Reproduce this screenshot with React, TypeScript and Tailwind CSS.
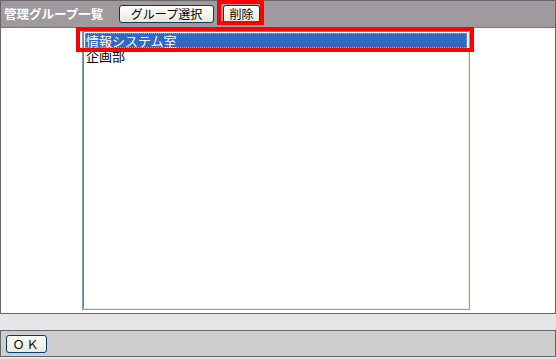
import React from 'react';

const jp = { fontFamily: '"Noto Sans CJK JP", "Noto Sans", sans-serif' };

const XpButton: React.FC<{ label: string; className?: string }> = ({ label, className = '' }) => (
  <button
    className={`h-[18px] rounded-[3px] border border-[#003c74] bg-gradient-to-b from-white to-[#ece9d8] text-[12px] leading-none text-black flex items-center justify-center ${className}`}
    style={jp}
  >
    {label}
  </button>
);

const App: React.FC = () => {
  const groups = ['情報システム室', '企画部'];

  return (
    <div className="relative w-[556px] h-[359px] bg-[#e8e4e8] overflow-hidden" style={jp}>
      {/* main panel */}
      <div className="border border-[#666666]">
        <div className="h-[27px] bg-[#9e9a9e] border-b border-[#7a777a] flex items-center pl-[3px]">
          <span className="w-[115px] text-[12.5px] font-bold text-white leading-none">管理グループ一覧</span>
          <XpButton label="グループ選択" className="w-[95px]" />
          <XpButton label="削除" className="w-[37px] ml-[9px]" />
        </div>
        <div className="h-[285px] bg-white pt-[2px]">
          <div className="ml-[81px] w-[388px] h-[280px] border border-[#7f9db9]">
            <div className="h-full border-l border-t border-[#808080] border-r-[#f1efe2] border-b-[#f1efe2] border-r border-b pt-[1px] px-[1px]">
              {groups.map((g, i) => (
                <div
                  key={g}
                  className={`h-[15px] pl-[1px] text-[13px] leading-[15px] ${
                    i === 0 ? 'bg-[#316ac5] text-white outline-1 outline-dotted outline-[#e0a030] -outline-offset-1' : 'text-black'
                  }`}
                >
                  {g}
                </div>
              ))}
            </div>
          </div>
        </div>
      </div>

      {/* footer */}
      <div className="mt-[16px] h-[27px] border border-[#666666] bg-[#cecece] flex items-center pl-[5px]">
        <XpButton label="ＯＫ" className="w-[41px] tracking-[2px]" />
      </div>

      {/* red annotation boxes */}
      <div className="absolute left-[217px] top-0 w-[47px] h-[25px] border-[4px] border-[#ff0000]" />
      <div className="absolute left-[76px] top-[27px] w-[398px] h-[25px] border-[4px] border-[#ff0000]" />
    </div>
  );
};

export default App;
